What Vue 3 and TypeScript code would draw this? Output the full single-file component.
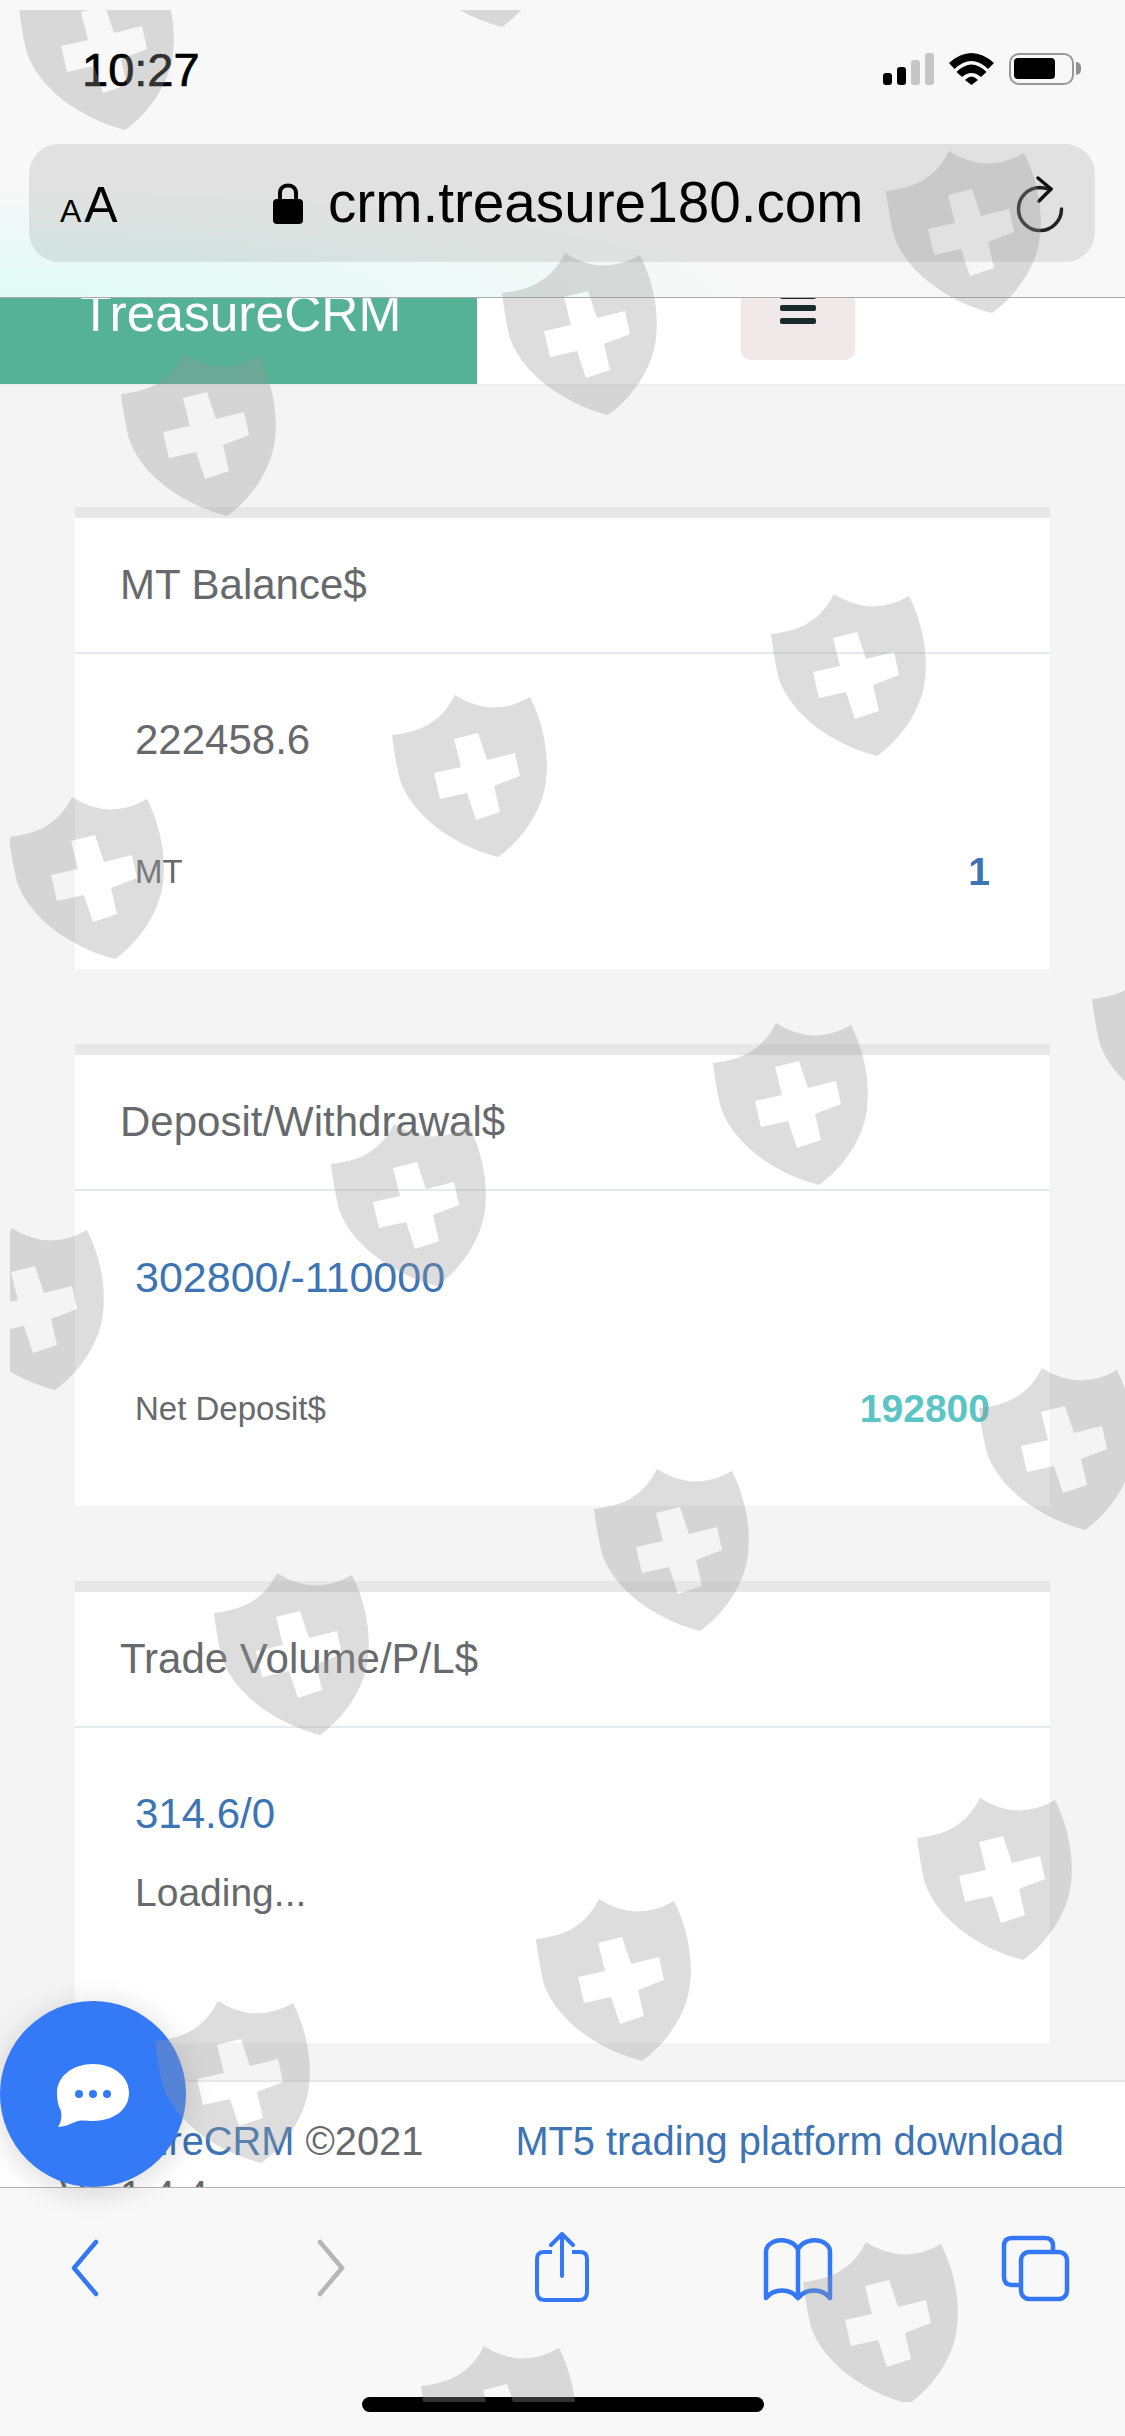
<script setup lang="ts">
interface Spot { x: number; y: number }
const shields: Spot[] = [
  { x: 19, y: -32 }, { x: 396, y: -135 }, { x: 886, y: 151 }, { x: 502, y: 253 },
  { x: 121, y: 354 }, { x: 771, y: 594 }, { x: 392, y: 695 }, { x: 9, y: 797 },
  { x: 1092, y: 959 }, { x: 713, y: 1023 }, { x: 331, y: 1124 }, { x: -51, y: 1228 },
  { x: 979, y: 1368 }, { x: 594, y: 1469 }, { x: 214, y: 1573 }, { x: 917, y: 1798 },
  { x: 536, y: 1899 }, { x: 155, y: 2001 }, { x: 803, y: 2242 }, { x: 421, y: 2346 }
]
const shieldPath =
  'M63 0Q100 24 138 2C152 30 157 60 154 85C151 115 130 145 106 162C60 150 20 120 8 85C3 65 0 40 0 40C25 37 48 30 63 0Z' +
  'M62 44L86 38L95 65L123 58L128 81L102 91L108 117L84 125L75 98L48 104L42 78L69 72Z'
const place = (s: Spot) => ({ left: `${s.x - 10}px`, top: `${s.y - 10}px` })
</script>

<template>
  <div class="phone">
    <header class="chrome">
      <div class="status">
        <span class="time">10:27</span>
        <div class="status-icons">
          <div class="signal">
            <i class="b1"></i><i class="b2"></i><i class="b3"></i><i class="b4"></i>
          </div>
          <svg class="wifi" width="45" height="32" viewBox="0 0 45 32">
            <path d="M0 10Q22.500 -10 45 10L39 16Q22.500 0 5.500 16Z" fill="#000" />
            <path d="M7.500 19Q22.500 4 37.500 19L32 24Q22.500 16 13 24Z" fill="#000" />
            <path d="M16 27Q22.500 20 29 27L22.500 32Z" fill="#000" />
          </svg>
          <div class="battery"><span></span></div>
        </div>
      </div>
      <div class="urlbar">
        <span class="aa"><small>A</small>A</span>
        <div class="address">
          <svg width="30" height="42" viewBox="0 0 30 42">
            <path d="M7 18V11C7 1 23 1 23 11V18" fill="none" stroke="#000" stroke-width="4" />
            <rect x="0" y="17" width="30" height="25" rx="4" fill="#000" />
          </svg>
          <span class="url">crm.treasure180.com</span>
        </div>
        <svg class="reload" width="48" height="60" viewBox="0 0 48 60">
          <path d="M35 16L24 14.500A21.500 21.500 0 1 0 45.500 36" fill="none" stroke="#222" stroke-width="3.500" stroke-linecap="round" />
          <path d="M22 5L35 16L23 28" fill="none" stroke="#111" stroke-width="3.500" stroke-linecap="round" stroke-linejoin="round" />
        </svg>
      </div>
    </header>

    <nav class="navbar">
      <div class="brand"><span>TreasureCRM</span></div>
      <div class="burger"><i></i><i></i><i></i></div>
    </nav>

    <main class="content">
      <section class="card">
        <h5 class="card-title">MT Balance$</h5>
        <div class="card-body">
          <div class="value">222458.6</div>
          <div class="stat">
            <span class="label">MT</span>
            <strong class="blue">1</strong>
          </div>
        </div>
      </section>
      <section class="card">
        <h5 class="card-title">Deposit/Withdrawal$</h5>
        <div class="card-body">
          <div class="value blue wide">302800/-110000</div>
          <div class="stat">
            <span class="label">Net Deposit$</span>
            <strong class="teal">192800</strong>
          </div>
        </div>
      </section>
      <section class="card">
        <h5 class="card-title">Trade Volume/P/L$</h5>
        <div class="card-body">
          <div class="value blue">314.6/0</div>
          <div class="loading">Loading...</div>
        </div>
      </section>
    </main>

    <footer class="footer">
      <div class="copy">
        <div><span class="blue">TreasureCRM</span> ©2021</div>
        <div class="version">Ver1.4.4</div>
      </div>
      <span class="blue download">MT5 trading platform download</span>
    </footer>

    <div class="toolbar">
      <svg class="t-back" width="36" height="72" viewBox="0 0 36 72">
        <path d="M28 10L6 36L28 62" fill="none" stroke="#3478f6" stroke-width="4.500" stroke-linecap="round" stroke-linejoin="round" />
      </svg>
      <svg class="t-fwd" width="36" height="72" viewBox="0 0 36 72">
        <path d="M8 10L30 36L8 62" fill="none" stroke="#b6b6b6" stroke-width="4.500" stroke-linecap="round" stroke-linejoin="round" />
      </svg>
      <svg class="t-share" width="64" height="72" viewBox="0 0 64 72">
        <path d="M22 20H14Q7 20 7 27V60Q7 68 15 68H49Q57 68 57 60V27Q57 20 50 20H42" fill="none" stroke="#3478f6" stroke-width="4" />
        <path d="M32 44V3M21 13L32 2L43 13" fill="none" stroke="#3478f6" stroke-width="4" stroke-linecap="round" stroke-linejoin="round" />
      </svg>
      <svg class="t-book" width="76" height="72" viewBox="0 0 76 72">
        <path d="M38 17C32 7 18 6 10 12Q6 15 6 20V66C14 56 30 56 38 66C46 56 62 56 70 66V20Q70 15 66 12C58 6 44 7 38 17V64" fill="none" stroke="#3478f6" stroke-width="4.500" stroke-linejoin="round" />
      </svg>
      <svg class="t-tabs" width="73" height="72" viewBox="0 0 73 72">
        <path d="M21 53H14Q6 53 6 45V14Q6 6 14 6H47Q55 6 55 14V19" fill="none" stroke="#3478f6" stroke-width="4.500" />
        <rect x="23" y="20" width="46" height="47" rx="8" fill="none" stroke="#3478f6" stroke-width="4.500" />
      </svg>
      <div class="home"></div>
    </div>

    <button class="chat" type="button" aria-label="chat">
      <svg width="72" height="63" viewBox="0 0 72 63">
        <path d="M36 0C56 0 72 12 72 29C72 46 56 57 36 57C30 57 26 56 21 57C15 59 8 63 1 63C4 58 5 54 4 47C1 42 0 36 0 29C0 12 16 0 36 0Z" fill="#fff" />
        <circle cx="22" cy="30" r="4" fill="#3479f6" />
        <circle cx="36" cy="30" r="4" fill="#3479f6" />
        <circle cx="50" cy="30" r="4" fill="#3479f6" />
      </svg>
    </button>

    <div class="watermark">
      <svg v-for="(s, i) in shields" :key="i" class="shield" :style="place(s)" width="155" height="163" viewBox="0 0 155 163">
        <path :d="shieldPath" fill="#999" fill-opacity=".33" fill-rule="evenodd" />
      </svg>
    </div>
  </div>
</template>

<style>
html, body { margin: 0; padding: 0; background: #f4f4f4; }
</style>

<style scoped>
.phone {
  position: relative;
  width: 1125px;
  height: 2436px;
  overflow: hidden;
  display: flex;
  flex-direction: column;
  background: #f4f4f4;
  color: #676a6c;
  font-family: "Liberation Sans", Arial, sans-serif;
}
.chrome {
  position: relative;
  z-index: 3;
  box-sizing: border-box;
  height: 298px;
  flex: none;
  padding-top: 44px;
  background: radial-gradient(ellipse 750px 110px at 0 100%, #e2fbf5 0%, #e9faf6 40%, #f8f8f8 100%) #f8f8f8;
  border-bottom: 1px solid #a9a9a9;
}
.status {
  display: flex;
  align-items: center;
  justify-content: space-between;
  height: 50px;
  padding: 0 44px 0 82px;
}
.time {
  font-size: 47px;
  font-weight: 400;
  color: #000;
  -webkit-text-stroke: 0.7px #000;
}
.status-icons { display: flex; align-items: center; gap: 15px; }
.signal { display: flex; align-items: flex-end; gap: 5px; height: 32px; }
.signal i { width: 9px; border-radius: 3px; display: block; }
.b1 { height: 12px; background: #000; }
.b2 { height: 18px; background: #000; }
.b3 { height: 25px; background: #c6c6c6; }
.b4 { height: 32px; background: #c6c6c6; }
.battery {
  position: relative;
  box-sizing: border-box;
  width: 65px;
  height: 32px;
  padding: 3px;
  border: 2.500px solid #989898;
  border-radius: 10px;
  margin-right: 7px;
}
.battery span { display: block; width: 41px; height: 21px; background: #000; border-radius: 4px; }
.battery::after {
  content: "";
  position: absolute;
  right: -9px;
  top: 7px;
  width: 5px;
  height: 13px;
  background: #8f8f8f;
  border-radius: 0 6px 6px 0;
}
.urlbar {
  display: flex;
  align-items: center;
  box-sizing: border-box;
  height: 118px;
  margin: 50px 30px 0 29px;
  padding: 0 31px 0 31px;
  background: rgba(0, 0, 0, 0.09);
  border-radius: 30px;
}
.aa { width: 213px; font-size: 50px; color: #000; line-height: 1; margin-top: 4px; flex: none; }
.aa small { font-size: 32px; margin-right: 3px; }
.address { display: flex; align-items: center; gap: 25px; flex: 1; }
.url { font-size: 56.700px; color: #000; letter-spacing: 0; line-height: 1; }
.reload { flex: none; }
.navbar {
  flex: none;
  display: flex;
  height: 88px;
  box-sizing: border-box;
  background: #fff;
  border-bottom: 2px solid #eeeeee;
}
.brand {
  width: 477px;
  height: 86px;
  box-sizing: border-box;
  padding-left: 80px;
  background: #55b296;
  color: #fff;
  font-size: 51.500px;
  line-height: 50px;
}
.brand span { display: block; margin-top: -10px; }
.burger {
  box-sizing: border-box;
  width: 114px;
  height: 62px;
  margin-left: 264px;
  padding: 0 0 36px 39px;
  display: flex;
  flex-direction: column;
  justify-content: flex-end;
  gap: 7px;
  background: #f1e8ea;
  border-radius: 0 0 10px 10px;
}
.burger i { display: block; width: 36px; height: 6px; background: #1a2a2a; border-radius: 2px; flex: none; }
.burger i:first-child { height: 7px; margin-bottom: -1px; }
.content {
  flex: 1;
  display: flex;
  flex-direction: column;
  gap: 75px;
  padding: 121px 75px 0;
}
.card {
  box-sizing: border-box;
  height: 462px;
  flex: none;
  background: #fff;
  border-top: 11px solid #e7e7e7;
}
.card-title {
  box-sizing: border-box;
  height: 136px;
  margin: 0;
  padding: 0 0 0 45px;
  display: flex;
  align-items: center;
  font-size: 42px;
  font-weight: 400;
  border-bottom: 2px solid #e7eaec;
}
.card-body { padding: 56px 60px 0 60px; }
.value { font-size: 42px; line-height: 60px; }
.value.wide { font-size: 43px; }
.blue { color: #3c74b4; }
.teal { color: #5bc4c4; }
.stat {
  display: flex;
  justify-content: space-between;
  align-items: center;
  margin-top: 77px;
}
.label { font-size: 33px; line-height: 50px; }
.stat strong { font-size: 39px; line-height: 50px; font-weight: 700; }
.loading { font-size: 39px; line-height: 60px; margin-top: 19px; }
.footer {
  flex: none;
  box-sizing: border-box;
  height: 107px;
  display: flex;
  justify-content: space-between;
  padding: 32px 61px 0 46px;
  background: #fff;
  border-top: 2px solid #e7e7e7;
  overflow: hidden;
  font-size: 39.800px;
  line-height: 54px;
}
.version { margin-left: 14px; }
.toolbar {
  position: relative;
  z-index: 3;
  flex: none;
  box-sizing: border-box;
  height: 249px;
  display: flex;
  align-items: flex-start;
  padding: 44px 0 0 68px;
  background: #f8f8f8;
  border-top: 1px solid #b2b2b2;
}
.t-fwd { margin-left: 208px; }
.t-share { margin-left: 182px; }
.t-book { margin-left: 166px; }
.t-tabs { margin-left: 162px; }
.home {
  position: absolute;
  left: 362px;
  bottom: 24px;
  width: 402px;
  height: 15px;
  border-radius: 8px;
  background: #000;
}
.chat {
  position: absolute;
  z-index: 4;
  left: 0;
  top: 2001px;
  width: 186px;
  height: 186px;
  padding: 0;
  border: 0;
  border-radius: 50%;
  background: #3479f6;
  box-shadow: 0 4px 30px rgba(0, 0, 0, 0.16);
  display: flex;
  align-items: center;
  justify-content: center;
}
.chat svg { margin-top: 2px; }
.watermark {
  position: absolute;
  z-index: 5;
  left: 10px;
  top: 10px;
  right: 0;
  height: 2392px;
  overflow: hidden;
  pointer-events: none;
}
.shield { position: absolute; }
</style>
